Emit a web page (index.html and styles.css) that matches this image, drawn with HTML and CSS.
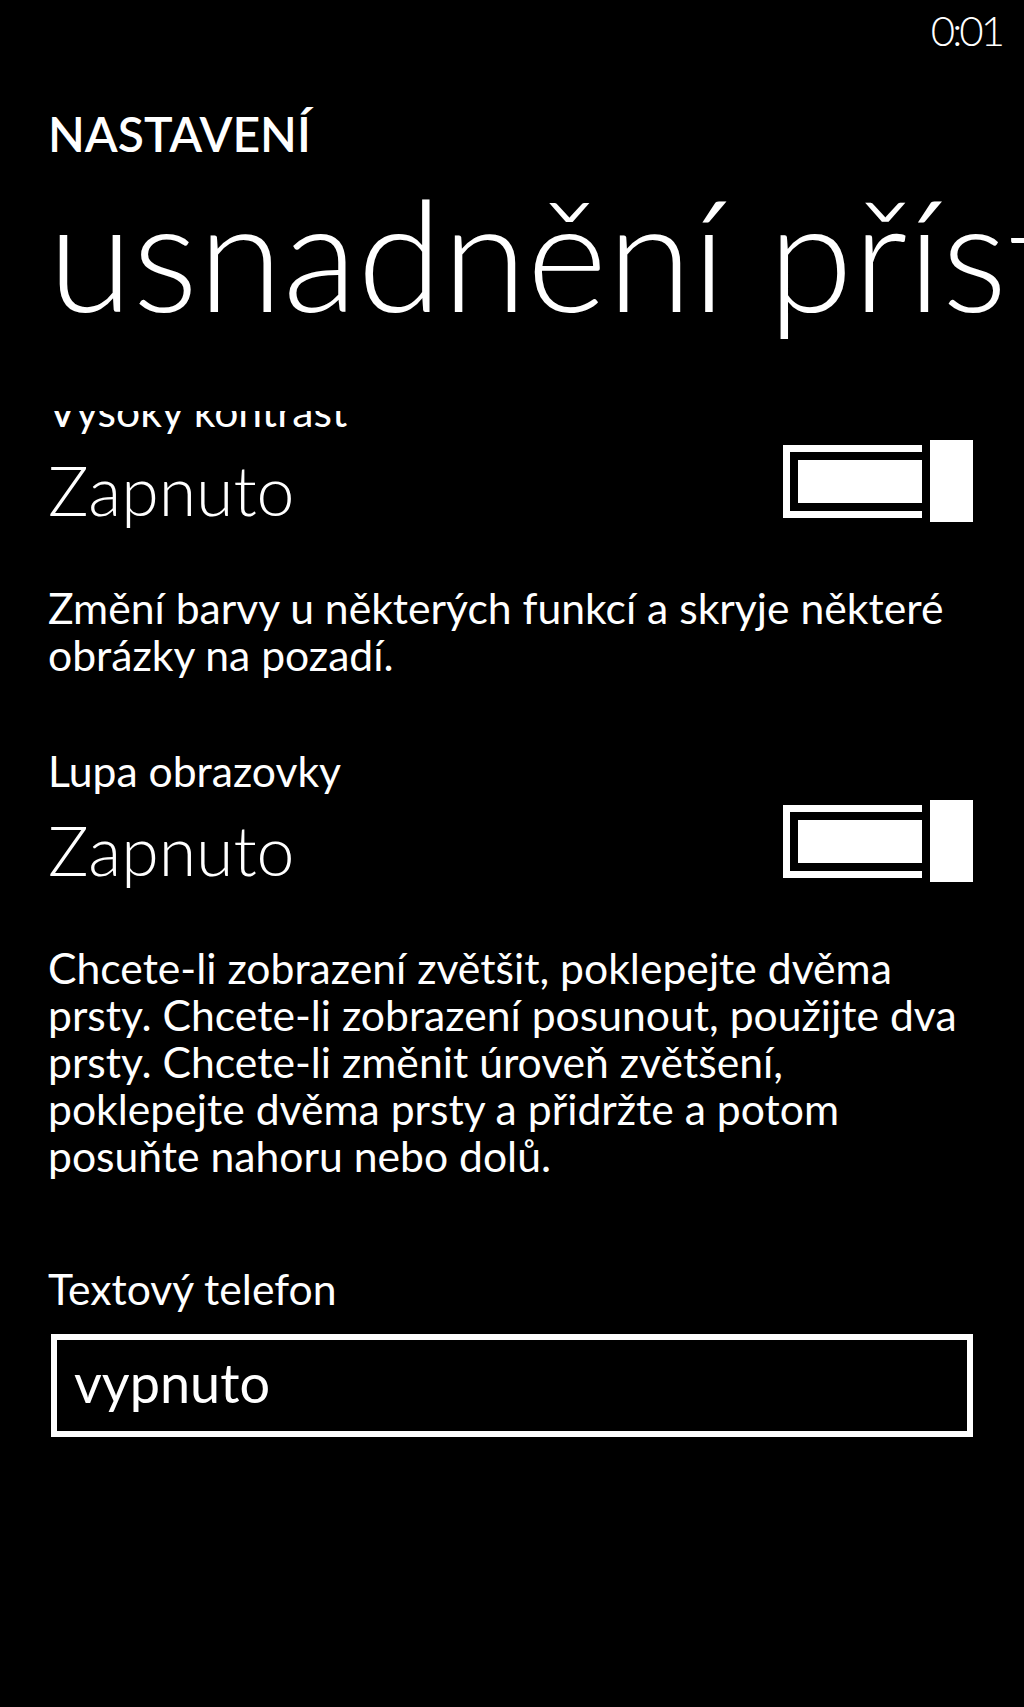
FILE: index.html
```html
<!DOCTYPE html>
<html lang="cs">
<head>
  <meta charset="UTF-8">
  <meta name="viewport" content="width=device-width, initial-scale=1.0">
  <title>Nastavení – usnadnění přístupu</title>
  <link rel="stylesheet" href="styles.css">
</head>
<body>
  <div class="status-bar">
    <span class="clock">0:01</span>
  </div>

  <div class="header">
    <div class="app-title">NASTAVENÍ</div>
    <div class="page-title">usnadnění přístupu</div>
  </div>

  <div class="scroll">
    <div class="scroll-content">
      <div class="setting">
        <div class="label">Vysoký kontrast</div>
        <div class="toggle-row">
          <div class="state">Zapnuto</div>
          <div class="switch">
            <div class="track"><div class="fill"></div></div>
            <div class="thumb"></div>
          </div>
        </div>
        <p class="desc">Změní barvy u některých funkcí a skryje některé obrázky na pozadí.</p>
      </div>

      <div class="setting">
        <div class="label">Lupa obrazovky</div>
        <div class="toggle-row">
          <div class="state">Zapnuto</div>
          <div class="switch">
            <div class="track"><div class="fill"></div></div>
            <div class="thumb"></div>
          </div>
        </div>
        <p class="desc">Chcete-li zobrazení zvětšit, poklepejte dvěma prsty. Chcete-li zobrazení posunout, použijte dva prsty. Chcete-li změnit úroveň zvětšení, poklepejte dvěma prsty a přidržte a potom posuňte nahoru nebo dolů.</p>
      </div>

      <div class="setting picker-setting">
        <div class="label">Textový telefon</div>
        <div class="picker">vypnuto</div>
      </div>
    </div>
  </div>
</body>
</html>
```

FILE: styles.css
```css
html, body {
  margin: 0;
  background: #000;
}

body {
  width: 1024px;
  height: 1707px;
  overflow: hidden;
  color: #fff;
  font-family: Lato, "Open Sans", sans-serif;
}

.status-bar {
  display: flex;
  justify-content: flex-end;
  padding-right: 22px;
  height: 60px;
}

.clock {
  font-size: 42px;
  font-weight: 300;
  line-height: 60px;
  letter-spacing: -3px;
}

.header {
  padding-left: 48px;
}

.app-title {
  margin-top: 46px;
  font-size: 48px;
  font-weight: 600;
  line-height: 56px;
}

.page-title {
  margin-top: 11px;
  font-size: 154px;
  font-weight: 300;
  line-height: 160px;
  white-space: nowrap;
}

.scroll {
  margin-top: 78px;
  height: 1296px;
  overflow: hidden;
}

.scroll-content {
  margin-top: -25px;
  padding: 0 51px 0 48px;
}

.setting {
  margin-bottom: 68px;
}

.label {
  font-size: 42.67px;
  line-height: 50px;
}

.toggle-row {
  display: flex;
  justify-content: space-between;
  align-items: flex-start;
  margin-top: 4px;
}

.state {
  font-size: 68px;
  font-weight: 300;
  line-height: 100px;
}

.switch {
  display: flex;
  align-items: center;
  gap: 8px;
}

.track {
  box-sizing: border-box;
  width: 139px;
  height: 73px;
  border: 7px solid #fff;
  border-right: none;
  padding: 8px 0 8px 8px;
}

.fill {
  height: 100%;
  background: #fff;
}

.thumb {
  width: 43px;
  height: 82px;
  background: #fff;
}

.desc {
  margin: 44px 0 0;
  font-size: 42.67px;
  line-height: 47px;
}

.picker-setting {
  margin-top: 85px;
}

.picker {
  margin: 20px 0 0 3px;
  border: 6px solid #fff;
  padding: 0 17px 5px;
  font-size: 54px;
  line-height: 86px;
}
```
